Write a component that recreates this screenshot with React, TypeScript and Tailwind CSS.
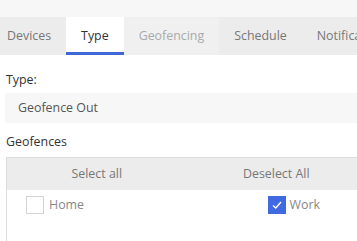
import React from 'react';

const tabs = [
  { label: 'Devices', state: 'normal' },
  { label: 'Type', state: 'active' },
  { label: 'Geofencing', state: 'disabled' },
  { label: 'Schedule', state: 'normal' },
  { label: 'Notifications', state: 'normal' },
];

const Checkbox: React.FC<{ checked?: boolean }> = ({ checked }) =>
  checked ? (
    <span className="flex h-[18px] w-[18px] shrink-0 items-center justify-center bg-[#4169e1]">
      <svg width="12" height="12" viewBox="0 0 12 12" fill="none">
        <path d="M2 6.5 L4.8 9 L10 3" stroke="white" strokeWidth="1.4" />
      </svg>
    </span>
  ) : (
    <span className="h-[18px] w-[18px] shrink-0 border border-[#d4d4d4] bg-white" />
  );

const App: React.FC = () => {
  return (
    <div className="h-[241px] w-[357px] overflow-hidden bg-white text-[12px] font-['Open_Sans',sans-serif]">
      <div className="h-[17px] bg-[#f7f7f7]" />
      <div className="flex h-[38px] -ml-[8px] bg-[#ececec] text-[12.4px]">
        {tabs.map((t) => (
          <div
            key={t.label}
            className={
              t.state === 'active'
                ? 'flex shrink-0 items-center border-b-[3px] border-[#3f67d6] bg-white px-[15px] pt-[3px] text-[#333]'
                : t.state === 'disabled'
                ? 'flex shrink-0 items-center bg-[#f0f0f0] px-[15px] text-[#aaa]'
                : 'flex shrink-0 items-center px-[15px] text-[#777]'
            }
          >
            {t.label}
          </div>
        ))}
      </div>
      <div className="pl-[6px] text-[12.4px]">
        <div className="mt-[16px] leading-[18px] text-[#333]">Type:</div>
        <div className="ml-[-1px] mt-[4px] flex h-[30px] w-[360px] items-center bg-[#f7f7f7] pl-[13px] text-[#555]">
          Geofence Out
        </div>
        <div className="mt-[10px] leading-[18px] text-[#333]">Geofences</div>
        <div className="mt-[6px] w-[360px] border-l border-t border-[#dcdcdc]">
          <div className="grid h-[32px] grid-cols-2 bg-[#ececec] text-[#777]">
            <div className="flex items-center justify-center">Select all</div>
            <div className="flex items-center justify-center">Deselect All</div>
          </div>
          <div className="grid h-[60px] grid-cols-2 pt-[6px] text-[#888]">
            <div className="flex items-start gap-[5px] pl-[19px]">
              <Checkbox />
              <span className="leading-[18px]">Home</span>
            </div>
            <div className="flex items-start gap-[4px] pl-[81px]">
              <Checkbox checked />
              <span className="leading-[18px]">Work</span>
            </div>
          </div>
        </div>
      </div>
    </div>
  );
};

export default App;
